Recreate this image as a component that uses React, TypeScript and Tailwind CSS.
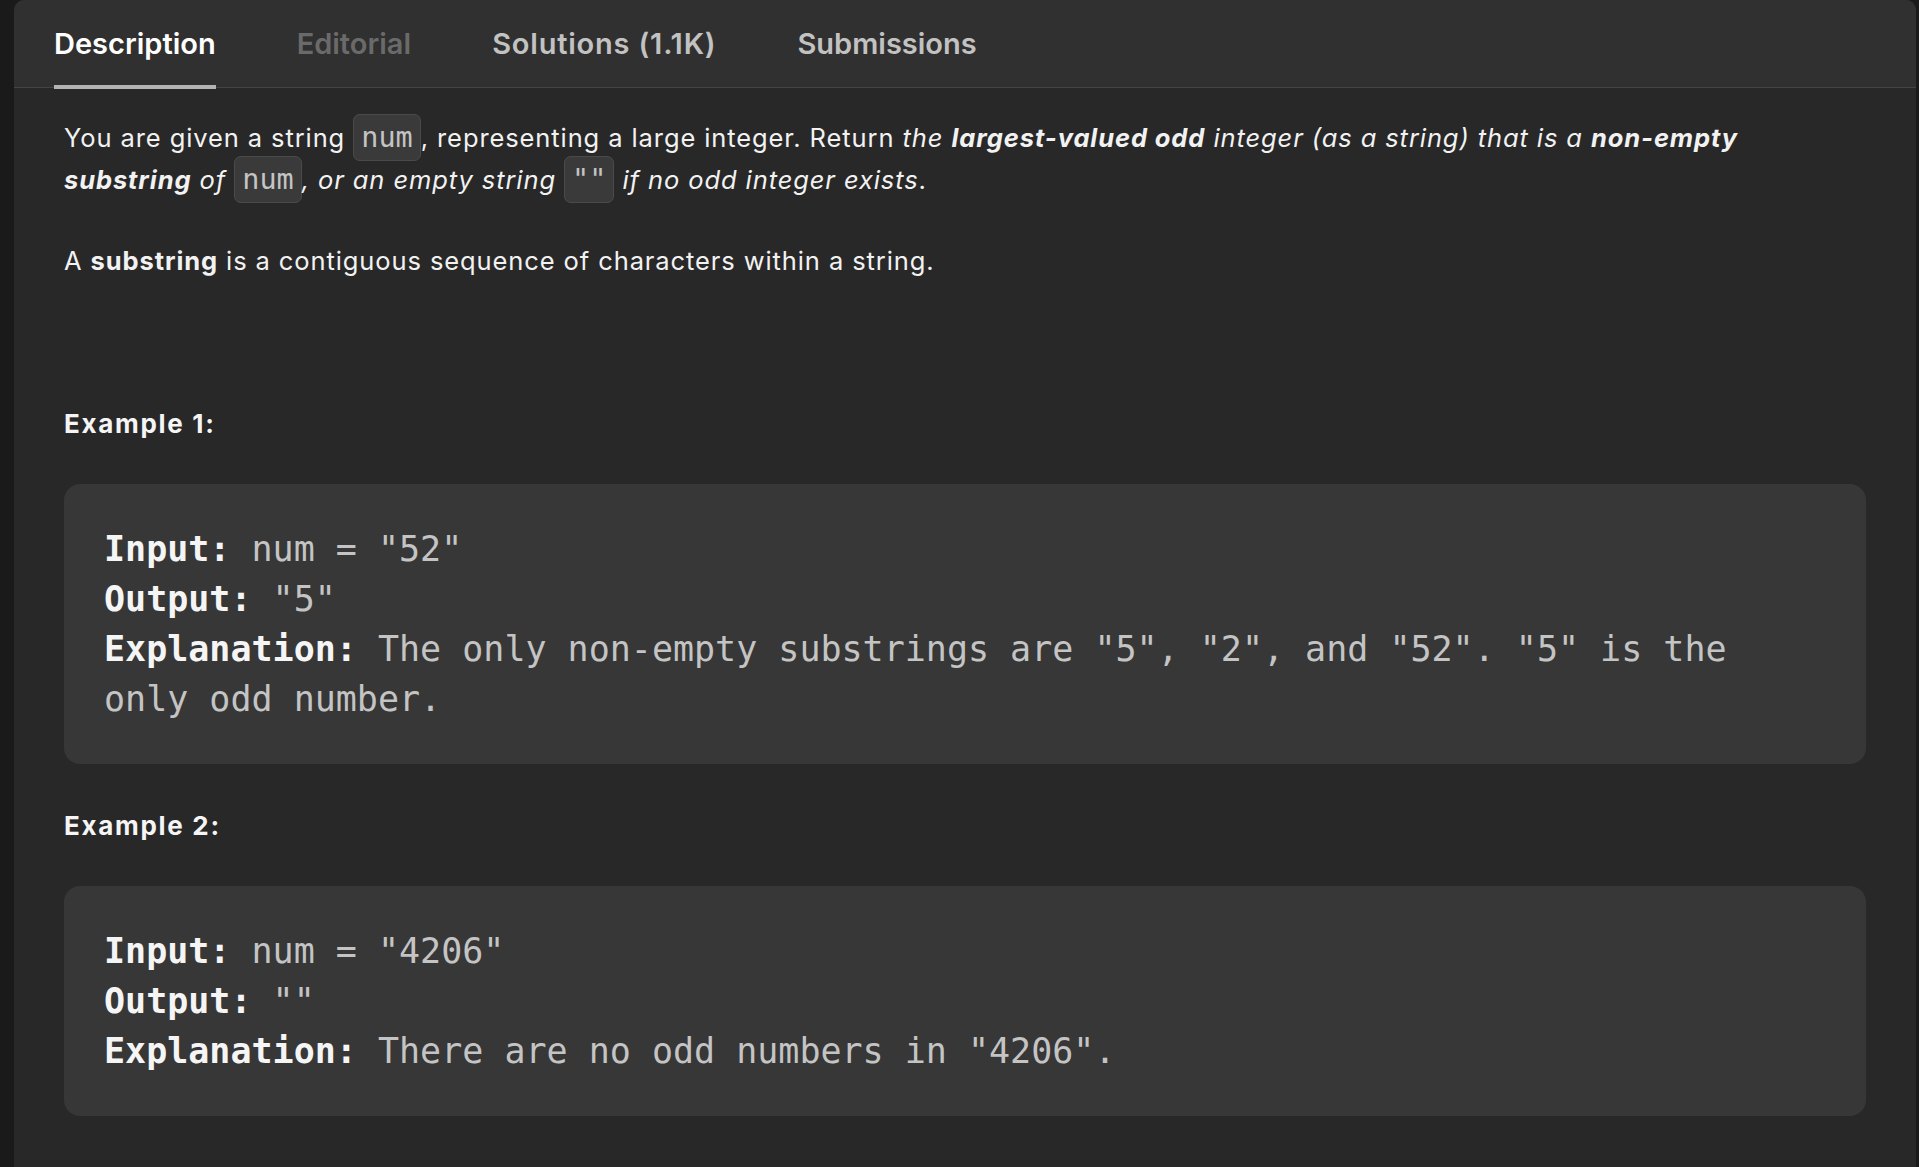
import React from 'react';

type Tab = { label: string; tone: string; active?: boolean };

const tabs: Tab[] = [
  { label: 'Description', tone: 'text-white', active: true },
  { label: 'Editorial', tone: 'text-[#6a6a6a]' },
  { label: 'Solutions (1.1K)', tone: 'text-[#c2c2c2] tracking-[0.8px]' },
  { label: 'Submissions', tone: 'text-[#c2c2c2]' },
];

const sans = "font-['Inter','Noto_Sans',sans-serif]";
const mono = "font-['DejaVu_Sans_Mono','Liberation_Mono',monospace]";

const Code: React.FC<{ children: React.ReactNode }> = ({ children }) => (
  <code
    className={`${mono} not-italic font-normal tracking-normal text-[28.5px] leading-none text-[#c4c4c4] bg-[#3a3a3a] border border-[#4a4a4a] rounded-[7px] px-[7px] py-[6px]`}
  >
    {children}
  </code>
);

type Line = { label: string; value: string };

const Example: React.FC<{ title: string; lines: Line[] }> = ({ title, lines }) => (
  <div>
    <p className="font-bold text-[26px] tracking-[1.7px] text-[#f5f5f5] mb-[39px]">{title}</p>
    <pre
      className={`${mono} tracking-normal text-[35px] leading-[50px] bg-[#373737] rounded-[16px] px-[40px] py-[40px] whitespace-pre-wrap mb-[41px]`}
    >
      {lines.map((l) => (
        <div key={l.label}>
          <strong className="text-[#f5f5f5]">{l.label} </strong>
          <span className="text-[#c4c4c4]">{l.value}</span>
        </div>
      ))}
    </pre>
  </div>
);

export default function App() {
  return (
    <div className="min-h-screen w-full bg-[#1a1a1a] pl-[14px] pr-[3px]">
      <div className={`${sans} min-h-[1167px] rounded-t-[10px] bg-[#282828] overflow-hidden`}>
        <div className="h-[88px] bg-[#303030] border-b border-[#444444] flex items-center pl-[40px] gap-[81px]">
          {tabs.map((t) => (
            <div key={t.label} className="relative h-full flex items-center">
              <span className={`text-[29px] font-semibold ${t.tone}`}>{t.label}</span>
              {t.active && (
                <span className="absolute left-0 right-0 -bottom-[2px] h-[4px] bg-[#b4b4b4]" />
              )}
            </div>
          ))}
        </div>

        <div className="px-[50px] pt-[29px] text-[25.5px] tracking-[0.9px] leading-[42px] text-[#f2f2f2]">
          <p>
            You are given a string <Code>num</Code>, representing a large integer. Return{' '}
            <em>
              the <strong>largest-valued odd</strong> integer (as a string) that is a{' '}
              <strong>non-empty</strong>
              <br />
              <strong>substring</strong> of{' '}
            </em>
            <Code>num</Code>
            <em>, or an empty string </em>
            <Code>""</Code>
            <em> if no odd integer exists</em>.
          </p>
          <p className="mt-[39px] mb-[121px]">
            A <strong>substring</strong> is a contiguous sequence of characters within a string.
          </p>

          <Example
            title="Example 1:"
            lines={[
              { label: 'Input:', value: 'num = "52"' },
              { label: 'Output:', value: '"5"' },
              {
                label: 'Explanation:',
                value: 'The only non-empty substrings are "5", "2", and "52". "5" is the only odd number.',
              },
            ]}
          />
          <Example
            title="Example 2:"
            lines={[
              { label: 'Input:', value: 'num = "4206"' },
              { label: 'Output:', value: '""' },
              { label: 'Explanation:', value: 'There are no odd numbers in "4206".' },
            ]}
          />
        </div>
      </div>
    </div>
  );
}
